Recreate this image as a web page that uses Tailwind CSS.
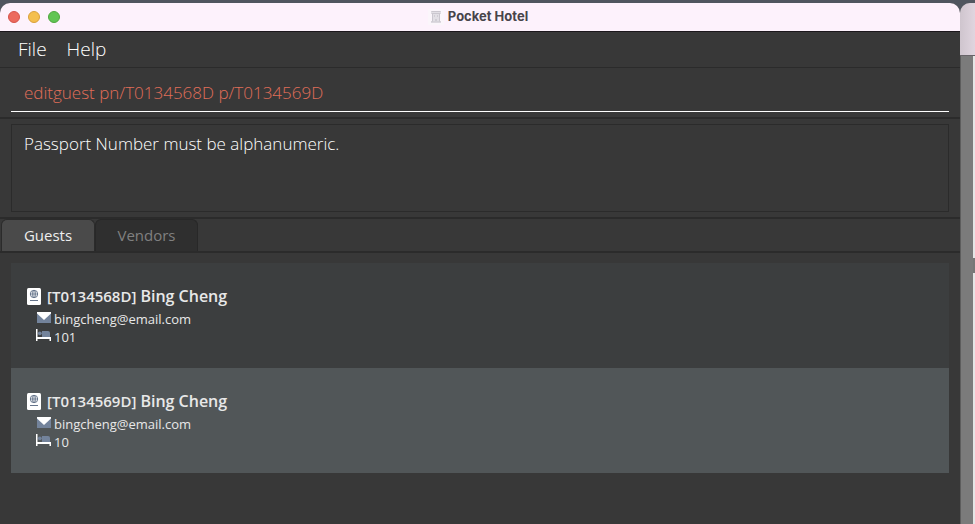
<!DOCTYPE html>
<html lang="en">
<head>
<meta charset="utf-8">
<title>Pocket Hotel</title>
<script src="https://cdn.jsdelivr.net/npm/@tailwindcss/browser@4"></script>
</head>
<body class="flex h-screen overflow-hidden bg-[#50565f] pt-[3px] font-['Open_Sans','Noto_Sans',sans-serif]">
<svg class="absolute" width="0" height="0" aria-hidden="true">
  <symbol id="passport" viewBox="0 0 14 17">
    <rect width="14" height="17" rx="1.5" fill="#fff"/>
    <g fill="none" stroke="#66758c"><circle cx="7" cy="6" r="3.7"/><ellipse cx="7" cy="6" rx="1.6" ry="3.7" stroke-width=".8"/><path d="M3.3 6h7.4M7 2.3v7.4" stroke-width=".8"/><path d="M3 12.5h8"/></g>
  </symbol>
  <symbol id="mail" viewBox="0 0 14 11">
    <path d="M0 0h14v11H0z" fill="#73839b"/><path d="M0 0h14v1.500L7 8 0 1.500z" fill="#fff"/>
  </symbol>
  <symbol id="bed" viewBox="0 0 15 12">
    <path d="M6 2h6q2 0 2 2v4H6z" fill="#73839b"/><circle cx="3.800" cy="4.300" r="1.900" fill="#73839b"/><path d="M0 0h1.500v8H15v4h-1.500v-2h-12v2H0z" fill="#fff"/>
  </symbol>
</svg>
<main class="flex min-w-0 flex-1 flex-col overflow-hidden rounded-t-[10px] bg-[#383838]">
  <header class="relative flex h-7 shrink-0 items-center justify-center gap-1 bg-[#fdf2fc] pr-1">
    <div class="absolute left-2 flex gap-2">
      <button aria-label="Close" class="size-3 rounded-full border border-[#d5544b] bg-[#ec6a5e]"></button>
      <button aria-label="Minimize" class="size-3 rounded-full border border-[#d9a13c] bg-[#f4bf4f]"></button>
      <button aria-label="Zoom" class="size-3 rounded-full border border-[#50a73f] bg-[#61c554]"></button>
    </div>
    <svg width="16" height="16" viewBox="0 0 16 16" aria-hidden="true"><path d="M0 0h16v16H0z" fill="#fbf6fb"/><path d="M3 2h10v2.500h-1V12h1v1.500H3V12h1V4.500H3z" fill="#e2dfe5"/><path d="M3.500 2.500h9M3.500 4.500h9M4.500 5v7.500M11.500 5v7.500M3 13h10" stroke="#cbc7cf" fill="none"/><path d="M6 6h1v2H6zm3 0h1v2H9zM7 10h2v2H7z" fill="#d0cdd4"/></svg>
    <h1 class="font-[Inter,sans-serif] text-[13px] font-bold text-[#48444a]">Pocket Hotel</h1>
  </header>
  <nav class="flex h-[37px] shrink-0 items-center gap-5 border-t border-b border-t-[#1c171c] border-b-[#2b2b2b] pl-[18px] text-[19px] leading-7 font-light text-white">
    <button class="-mt-0.5">File</button><button class="-mt-0.5">Help</button>
  </nav>
  <div class="h-[51px] shrink-0 border-b-2 border-[#2b2b2b] px-[11px]">
    <input aria-label="Command" value="editguest pn/T0134568D p/T0134569D" spellcheck="false" class="block h-11 w-full border-b border-white bg-transparent px-[13px] pt-1.5 text-[17px] font-light text-[#e06e58] outline-none">
  </div>
  <div class="h-[100px] shrink-0 border-b-2 border-[#2b2b2b] px-[11px] pt-[5px]">
    <textarea aria-label="Result" readonly class="block h-[88px] w-full resize-none border border-[#2b2b2b] bg-transparent px-3 pt-[7px] text-[17px] leading-6 font-light text-white outline-none">Passport Number must be alphanumeric.</textarea>
  </div>
  <div role="tablist" class="flex h-[34px] shrink-0 items-start border-b-2 border-[#2b2b2b] pl-px text-[15px]">
    <button role="tab" aria-selected="true" class="h-8 w-[94px] rounded-t-md border border-b-0 border-[#2b2b2b] bg-[#4a4a4a] text-[#eee]">Guests</button>
    <button role="tab" aria-selected="false" class="h-8 w-[103px] rounded-t-md border border-b-0 border-[#282828] bg-[#2f2f2f] text-[#808080]">Vendors</button>
  </div>
  <ul class="mx-[11px] mt-2.5 text-[#e8e8e8]">
    <li class="h-[105px] bg-[#3c3e3f] pt-[21px] pl-4">
      <h2 class="mb-[3px] flex h-6 items-center gap-1.5 text-base font-semibold"><svg width="14" height="17" aria-hidden="true"><use href="#passport"/></svg><span class="flex items-center gap-1"><span class="text-[15px]">[T0134568D]</span><span>Bing Cheng</span></span></h2>
      <p class="flex h-[18px] items-center gap-[3px] pl-2.5 text-[13px]"><svg width="14" height="11" class="mb-1.5" aria-hidden="true"><use href="#mail"/></svg>bingcheng@email.com</p>
      <p class="flex h-[18px] items-center gap-[3px] pl-[9px] text-[13px]"><svg width="15" height="12" class="mb-1.5" aria-hidden="true"><use href="#bed"/></svg>101</p>
    </li>
    <li class="h-[105px] bg-[#515658] pt-[21px] pl-4">
      <h2 class="mb-[3px] flex h-6 items-center gap-1.5 text-base font-semibold"><svg width="14" height="17" aria-hidden="true"><use href="#passport"/></svg><span class="flex items-center gap-1"><span class="text-[15px]">[T0134569D]</span><span>Bing Cheng</span></span></h2>
      <p class="flex h-[18px] items-center gap-[3px] pl-2.5 text-[13px]"><svg width="14" height="11" class="mb-1.5" aria-hidden="true"><use href="#mail"/></svg>bingcheng@email.com</p>
      <p class="flex h-[18px] items-center gap-[3px] pl-[9px] text-[13px]"><svg width="15" height="12" class="mb-1.5" aria-hidden="true"><use href="#bed"/></svg>10</p>
    </li>
  </ul>
</main>
<aside class="flex w-[15px] shrink-0 flex-col overflow-hidden rounded-tl-[10px] bg-[#7b7b7b]" aria-hidden="true">
  <div class="h-[53px] shrink-0 border-b border-[#686469] bg-linear-to-r from-[#cfc5ce] to-[#e0d5df]"></div>
  <div class="flex flex-1 flex-col items-end border-l border-[#5d5d5d]">
    <div class="h-[202px] w-0.5 bg-[#e5e5e5]"></div>
    <div class="h-[15px] w-0.5 bg-[#777]"></div>
    <div class="w-0.5 flex-1 bg-[#e5e5e5]"></div>
  </div>
</aside>
</body>
</html>
